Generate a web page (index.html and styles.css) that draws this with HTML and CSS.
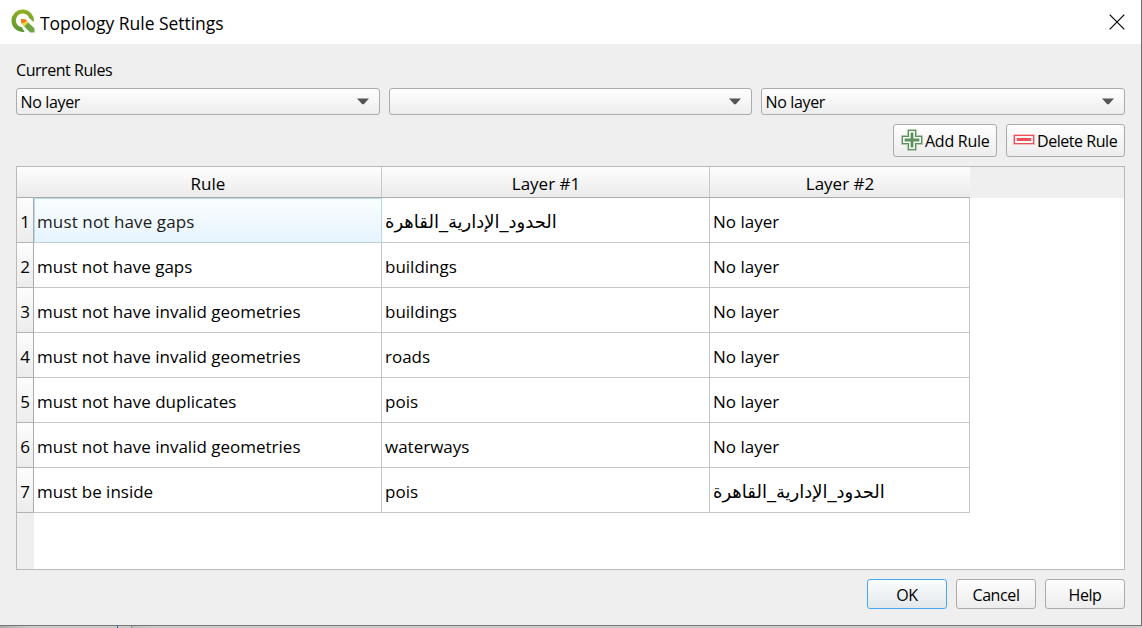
FILE: index.html
```html
<!DOCTYPE html>
<html lang="en">
<head>
<meta charset="utf-8">
<title>Topology Rule Settings</title>
<link rel="stylesheet" href="styles.css">
</head>
<body>
<div class="window">
  <header class="titlebar">
    <svg class="logo" viewBox="0 0 24 24">
      <defs><linearGradient id="green" x1="0" y1="0" x2="0" y2="1"><stop offset="0" stop-color="#93b023"/><stop offset="1" stop-color="#589632"/></linearGradient></defs>
      <path fill="url(#green)" fill-rule="evenodd" d="M13.6 22.7A11.2 11.2 0 1 1 22.8 13L18.3 9.2A6.9 6.9 0 1 0 10.8 18.2Z"/>
      <path fill="#6fa541" d="M13.1 13.8 17.3 13.5 23.5 19.4V23.4H19.2L13.1 17.6Z"/>
      <path fill="#f6d34c" d="M10 10 14.2 10.2 17.3 13.5 13.1 17.6 10.2 14.3Z"/>
      <path fill="#ee7913" d="M10 10 14.2 10.2 16 12 11.6 14.2 10.2 13.6Z"/>
    </svg>
    <h1 class="title">Topology Rule Settings</h1>
    <svg class="close" viewBox="0 0 16 16"><path d="M.7 .7 15.3 15.3M15.3 .7 .7 15.3"/></svg>
  </header>
  <main class="content">
    <div class="group-label">Current Rules</div>
    <div class="selectors">
      <div class="combo"><span>No layer</span><svg class="arrow" viewBox="0 0 12 7"><path d="M0 .5H12L6.8 6.2H5.2Z"/></svg></div>
      <div class="combo"><span></span><svg class="arrow" viewBox="0 0 12 7"><path d="M0 .5H12L6.8 6.2H5.2Z"/></svg></div>
      <div class="combo"><span>No layer</span><svg class="arrow" viewBox="0 0 12 7"><path d="M0 .5H12L6.8 6.2H5.2Z"/></svg></div>
    </div>
    <div class="tools">
      <div class="button add">
        <svg class="icon" viewBox="0 0 22 22"><path fill="#fff" stroke="#a0bfa0" stroke-width="2.4" d="M7.5 1.5H14.5V7.5H20.5V14.5H14.5V20.5H7.5V14.5H1.5V7.5H7.5Z"/><path fill="#fff" stroke="#5c905c" stroke-width="1.2" d="M7.5 1.5H14.5V7.5H20.5V14.5H14.5V20.5H7.5V14.5H1.5V7.5H7.5Z"/><path fill="#5c905c" d="M9.6 3.6H12.4V9.6H18.4V12.4H12.4V18.4H9.6V12.4H3.6V9.6H9.6Z"/></svg>
        <span>Add Rule</span>
      </div>
      <div class="button delete">
        <svg class="icon" viewBox="0 0 22 22"><path fill="#fff" stroke="#f4a8ac" stroke-width="2.4" d="M1.5 6.5H20.5V14.5H1.5Z"/><path fill="#fff" stroke="#ea5058" stroke-width="1.2" d="M1.5 6.5H20.5V14.5H1.5Z"/><path fill="#f05058" d="M3.7 9H18.3V12H3.7Z"/></svg>
        <span>Delete Rule</span>
      </div>
    </div>
    <div class="table">
      <div class="row head"><div class="th corner"></div><div class="th">Rule</div><div class="th">Layer #1</div><div class="th last">Layer #2</div></div>
      <div class="row"><div class="num">1</div><div class="cell selected">must not have gaps</div><div class="cell"><span class="arabic" lang="ar">الحدود_الإدارية_القاهرة</span></div><div class="cell">No layer</div></div>
      <div class="row"><div class="num">2</div><div class="cell">must not have gaps</div><div class="cell">buildings</div><div class="cell">No layer</div></div>
      <div class="row"><div class="num">3</div><div class="cell">must not have invalid geometries</div><div class="cell">buildings</div><div class="cell">No layer</div></div>
      <div class="row"><div class="num">4</div><div class="cell">must not have invalid geometries</div><div class="cell">roads</div><div class="cell">No layer</div></div>
      <div class="row"><div class="num">5</div><div class="cell">must not have duplicates</div><div class="cell">pois</div><div class="cell">No layer</div></div>
      <div class="row"><div class="num">6</div><div class="cell">must not have invalid geometries</div><div class="cell">waterways</div><div class="cell">No layer</div></div>
      <div class="row"><div class="num">7</div><div class="cell">must be inside</div><div class="cell">pois</div><div class="cell"><span class="arabic" lang="ar">الحدود_الإدارية_القاهرة</span></div></div>
      <div class="filler"></div>
    </div>
    <div class="actions">
      <div class="button primary">OK</div>
      <div class="button">Cancel</div>
      <div class="button">Help</div>
    </div>
  </main>
</div>
<div class="backdrop"></div>
</body>
</html>
```
FILE: styles.css
```css
* { box-sizing: border-box; }
body {
  margin: 0;
  width: 1142px;
  height: 628px;
  overflow: hidden;
  background: #fff;
  color: #000;
  font-family: "Open Sans", "DejaVu Sans", sans-serif;
  font-size: 17px;
  line-height: 24px;
  white-space: nowrap;
}
.window {
  display: flex;
  flex-direction: column;
  height: 626px;
  border-right: 1px solid #707070;
  border-bottom: 1px solid #777;
  background: #efefef;
}
.titlebar {
  display: flex;
  align-items: center;
  height: 44px;
  padding: 0 16px 0 11px;
  background: #fff;
}
.logo { width: 24px; height: 24px; margin-bottom: 2px; }
.title {
  flex: 1;
  margin: 0 0 0 5px;
  padding-top: 1px;
  font-size: 17.5px;
  font-weight: 400;
  letter-spacing: -0.04px;
}
.close { width: 16px; height: 16px; margin-bottom: 1px; fill: none; stroke: #000; stroke-width: 1.2; }
.content { padding: 14px 16px 0; }
.group-label { height: 24px; font-size: 16px; letter-spacing: -0.45px; }
.selectors {
  display: grid;
  grid-template-columns: 364px 363px 364px;
  gap: 9px;
  margin-top: 6px;
}
.combo {
  display: flex;
  align-items: center;
  justify-content: space-between;
  height: 27px;
  padding: 0 10px 0 3.5px;
  border: 1px solid #ababab;
  border-radius: 3px;
  background: linear-gradient(#fff, #ededed);
  font-size: 16px;
  letter-spacing: -0.35px;
}
.arrow { width: 12px; height: 7px; fill: #555; }
.tools { display: flex; justify-content: flex-end; gap: 9px; margin-top: 9px; }
.button {
  display: flex;
  align-items: center;
  justify-content: center;
  width: 80px;
  height: 30px;
  border: 1px solid #ababab;
  border-radius: 3px;
  background: linear-gradient(#fefefe, #ededed);
  font-size: 16px;
  letter-spacing: -0.4px;
}
.add, .delete { height: 33px; justify-content: flex-start; padding-left: 7px; gap: 2px; }
.add { width: 104px; letter-spacing: -0.25px; }
.delete { width: 119px; padding-left: 6px; letter-spacing: -0.45px; }
.icon { width: 22px; height: 22px; margin-bottom: 1px; }
.table {
  display: flex;
  flex-direction: column;
  height: 404px;
  margin-top: 9px;
  border: 1px solid #b9b9b9;
  background: #fff;
}
.row {
  display: grid;
  grid-template-columns: 17px 348px 328px 260px;
  height: 45px;
}
.head { height: 31px; background: #efefef; }
.th {
  padding: 5px 0 0 1px;
  border-right: 1px solid #c8c8c8;
  border-bottom: 1px solid #ababab;
  background: linear-gradient(#fdfdfd, #ebebeb);
  text-align: center;
}
.corner, .last { border-right: 0; }
.last { padding-left: 0; }
.num {
  padding-top: 12px;
  border-right: 1px solid #ababab;
  border-bottom: 1px solid #b2b2b2;
  background: linear-gradient(#fdfdfd, #ececec);
  text-align: center;
}
.cell {
  padding: 12px 0 0 3px;
  border-right: 1px solid #c6c6c6;
  border-bottom: 1px solid #c6c6c6;
}
.selected {
  padding: 11px 0 0 2px;
  border: 1px solid #b6d8ef;
  border-bottom-color: #c0cdd6;
  background: linear-gradient(#fafdff, #e6f4fe);
  color: #1b1b1b;
  letter-spacing: 0.12px;
}
.arabic { font-family: "DejaVu Sans", sans-serif; font-size: 18px; }
.filler { flex: 1; width: 17px; background: #efefef; }
.actions { display: flex; justify-content: flex-end; gap: 9px; margin-top: 9px; }
.actions .button { padding-top: 2px; }
.actions .primary { border-color: #48a9f0; background: linear-gradient(#fbfdfe, #e2e8ec); }
.backdrop { height: 2px; background: linear-gradient(90deg, #aaa, #ccc 30px 117px, #3455a5 117px 118px, #ccc 118px 131px, #999 131px 132px, #bbb 132px, #ccc 150px); }
```
